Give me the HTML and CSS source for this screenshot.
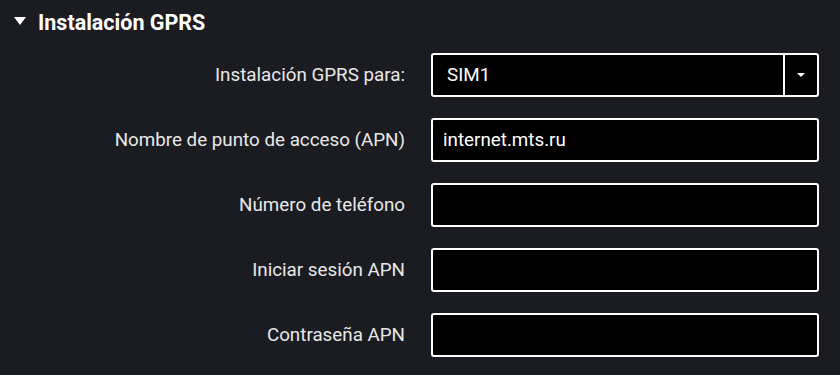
FILE: index.html
```html
<!DOCTYPE html>
<html lang="es">
<head>
<meta charset="utf-8">
<link rel="stylesheet" href="styles.css">
</head>
<body>
<section class="panel">
  <h2 class="panel-title"><span class="caret"></span>Instalación GPRS</h2>
  <div class="form">
    <label class="label">Instalación GPRS para:</label>
    <div class="select"><span class="select-value">SIM1</span><span class="select-btn"><span class="caret-sm"></span></span></div>
    <label class="label">Nombre de punto de acceso (APN)</label>
    <div class="input">internet.mts.ru</div>
    <label class="label">Número de teléfono</label>
    <div class="input"></div>
    <label class="label">Iniciar sesión APN</label>
    <div class="input"></div>
    <label class="label">Contraseña APN</label>
    <div class="input"></div>
  </div>
</section>
</body>
</html>
```
FILE: styles.css
```css
html, body {
  margin: 0;
  padding: 0;
  background: #1b1c21;
  color: #f2f2f2;
  font-family: Roboto, "Liberation Sans", sans-serif;
}
.panel {
  width: 840px;
  height: 375px;
}
.panel-title {
  margin: 0;
  height: 44px;
  display: flex;
  align-items: center;
  padding-left: 14px;
  font-size: 21.5px;
  font-weight: 700;
  color: #ffffff;
}
.caret {
  width: 0;
  height: 0;
  border-left: 6.5px solid transparent;
  border-right: 6.5px solid transparent;
  border-top: 8px solid #ffffff;
  margin-right: 12px;
  margin-top: -2px;
}
.form {
  display: grid;
  grid-template-columns: 405px 388px;
  column-gap: 26px;
  row-gap: 21px;
  margin-top: 9px;
  align-items: center;
}
.label {
  text-align: right;
  font-size: 18.8px;
  color: #e8e8e8;
}
.input, .select {
  box-sizing: border-box;
  height: 44px;
  border: 2px solid #ffffff;
  border-radius: 3px;
  background: #000000;
  color: #ffffff;
  font-size: 18.8px;
  display: flex;
  align-items: center;
  padding-left: 10px;
}
.select {
  padding-left: 0;
}
.select-value {
  flex: 1;
  padding-left: 14px;
}
.select-btn {
  width: 32px;
  height: 100%;
  border-left: 2px solid #ffffff;
  display: flex;
  align-items: center;
  justify-content: center;
}
.caret-sm {
  width: 0;
  height: 0;
  border-left: 4px solid transparent;
  border-right: 4px solid transparent;
  border-top: 4px solid #ffffff;
}
```
